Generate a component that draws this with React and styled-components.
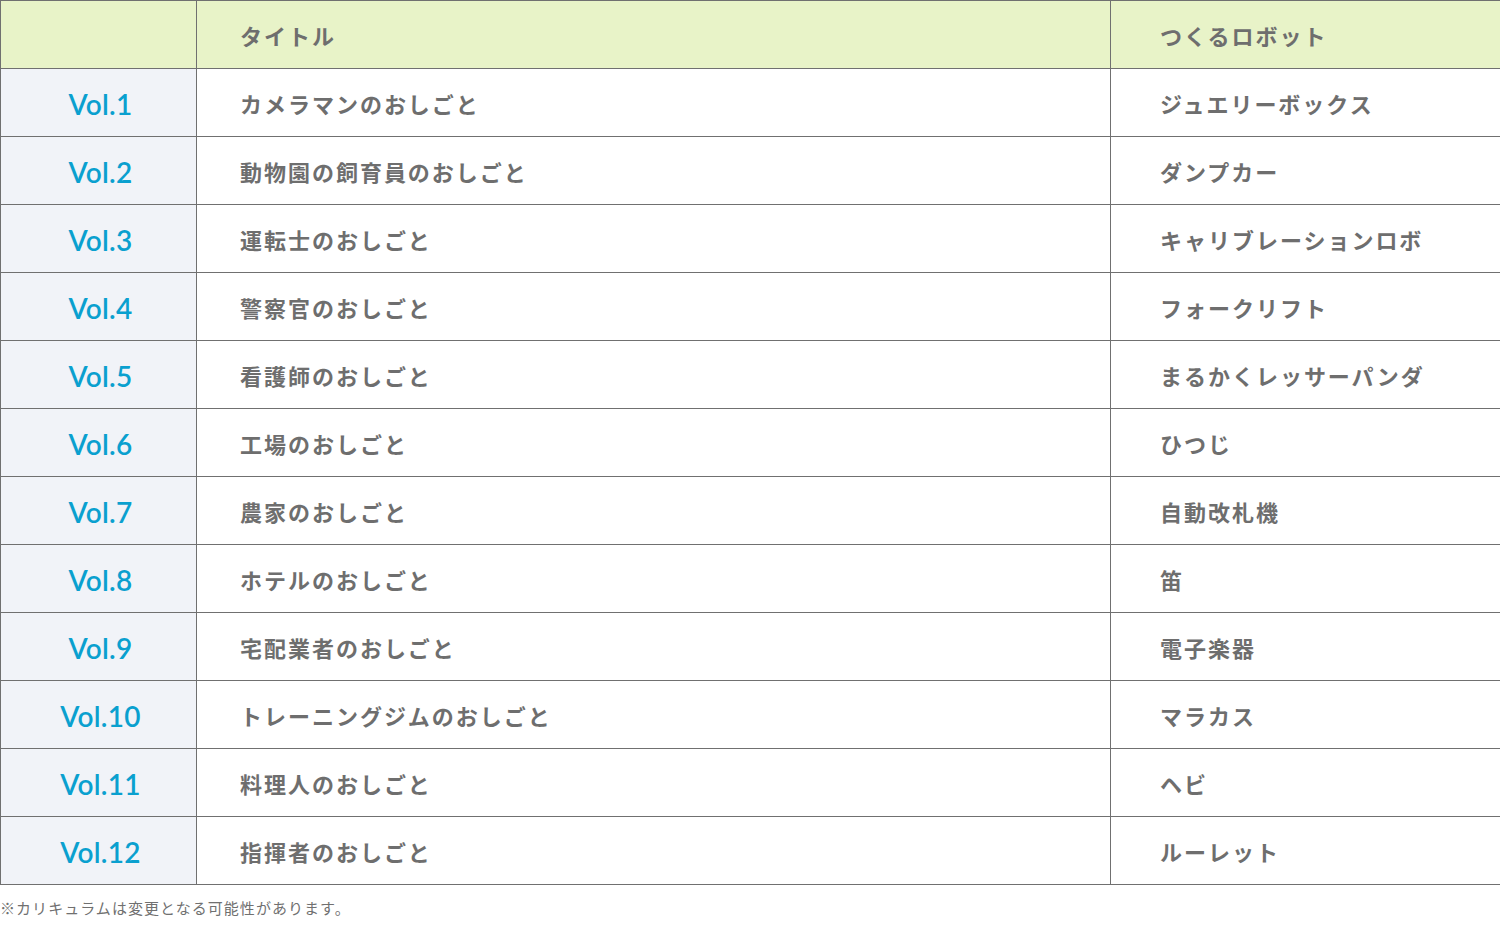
import React from 'react';
import styled, { createGlobalStyle } from 'styled-components';

const GlobalStyle = createGlobalStyle`
  html, body {
    margin: 0;
    padding: 0;
    background: #fff;
  }
  body {
    font-family: "Noto Sans CJK JP", "Noto Sans", sans-serif;
  }
`;

const Wrapper = styled.div`
  width: 1500px;
`;

const Table = styled.table`
  width: 1500px;
  table-layout: fixed;
  border-collapse: collapse;
  border: 1px solid #707070;
`;

const HeadRow = styled.tr`
  background: #e8f3c8;
  height: 68px;
`;

const Row = styled.tr`
  height: 68px;
`;

const Cell = styled.td`
  border: 1px solid #707070;
  padding: 1px 0 0 ${(p) => p.$pad || 0}px;
  color: #6e6e6e;
  font-size: 22px;
  font-weight: 700;
  letter-spacing: 0.09em;
  line-height: 1;
  text-align: left;
  vertical-align: middle;
  white-space: nowrap;
`;

const VolCell = styled.td`
  border: 1px solid #707070;
  background: ${(p) => (p.$head ? 'transparent' : '#f1f3f8')};
  padding: 2px 0 0 4px;
  text-align: center;
  color: #0aa0cf;
  font-family: Lato, "Noto Sans", sans-serif;
  font-size: 28px;
  font-weight: 600;
  letter-spacing: 0.01em;
  line-height: 1;
  vertical-align: middle;
`;

const Note = styled.p`
  margin: 11px 0 0;
  color: #707070;
  font-size: 15px;
  line-height: 24px;
  letter-spacing: 0.07em;
`;

const rows = [
  ['Vol.1', 'カメラマンのおしごと', 'ジュエリーボックス'],
  ['Vol.2', '動物園の飼育員のおしごと', 'ダンプカー'],
  ['Vol.3', '運転士のおしごと', 'キャリブレーションロボ'],
  ['Vol.4', '警察官のおしごと', 'フォークリフト'],
  ['Vol.5', '看護師のおしごと', 'まるかくレッサーパンダ'],
  ['Vol.6', '工場のおしごと', 'ひつじ'],
  ['Vol.7', '農家のおしごと', '自動改札機'],
  ['Vol.8', 'ホテルのおしごと', '笛'],
  ['Vol.9', '宅配業者のおしごと', '電子楽器'],
  ['Vol.10', 'トレーニングジムのおしごと', 'マラカス'],
  ['Vol.11', '料理人のおしごと', 'ヘビ'],
  ['Vol.12', '指揮者のおしごと', 'ルーレット'],
];

export default function App() {
  return (
    <Wrapper>
      <GlobalStyle />
      <Table>
        <colgroup>
          <col style={{ width: 196 }} />
          <col style={{ width: 914 }} />
          <col style={{ width: 390 }} />
        </colgroup>
        <thead>
          <HeadRow>
            <VolCell as="th" $head />
            <Cell as="th" $pad={43}>
              タイトル
            </Cell>
            <Cell as="th" $pad={49}>
              つくるロボット
            </Cell>
          </HeadRow>
        </thead>
        <tbody>
          {rows.map(([vol, title, robot]) => (
            <Row key={vol}>
              <VolCell>{vol}</VolCell>
              <Cell $pad={43}>{title}</Cell>
              <Cell $pad={49}>{robot}</Cell>
            </Row>
          ))}
        </tbody>
      </Table>
      <Note>※カリキュラムは変更となる可能性があります。</Note>
    </Wrapper>
  );
}
